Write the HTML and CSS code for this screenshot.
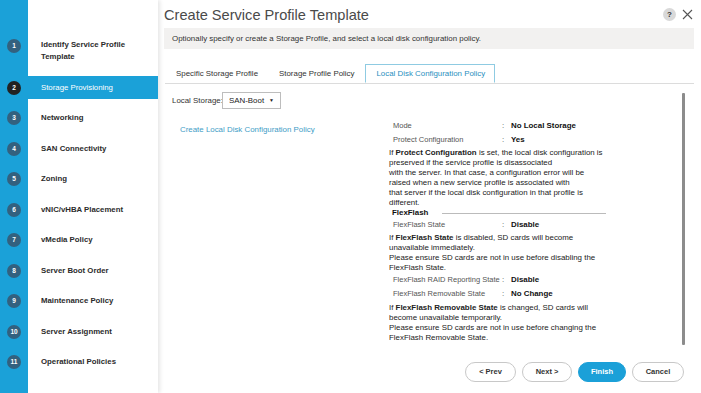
FILE: index.html
```html
<!DOCTYPE html>
<html>
    <head>
        <meta charset="UTF-8">
        <meta name="viewport" content="width=device-width, initial-scale=1.0">
        <link rel="stylesheet" href="styles.css">
    </head>
    <body>
        <div class="sidebar">
            <div class="step first"><span class="num"><span class="dot">1</span></span><span class="label">Identify Service Profile<br>Template</span></div>
            <div class="step active"><span class="num"><span class="dot">2</span></span><span class="label">Storage Provisioning</span></div>
            <div class="step"><span class="num"><span class="dot">3</span></span><span class="label">Networking</span></div>
            <div class="step"><span class="num"><span class="dot">4</span></span><span class="label">SAN Connectivity</span></div>
            <div class="step"><span class="num"><span class="dot">5</span></span><span class="label">Zoning</span></div>
            <div class="step"><span class="num"><span class="dot">6</span></span><span class="label">vNIC/vHBA Placement</span></div>
            <div class="step"><span class="num"><span class="dot">7</span></span><span class="label">vMedia Policy</span></div>
            <div class="step"><span class="num"><span class="dot">8</span></span><span class="label">Server Boot Order</span></div>
            <div class="step"><span class="num"><span class="dot">9</span></span><span class="label">Maintenance Policy</span></div>
            <div class="step"><span class="num"><span class="dot">10</span></span><span class="label">Server Assignment</span></div>
            <div class="step"><span class="num"><span class="dot">11</span></span><span class="label">Operational Policies</span></div>
        </div>

        <div class="main">
            <div class="header">
                <h1 class="title">Create Service Profile Template</h1>
                <div class="tools">
                    <span class="help">?</span>
                    <svg class="close" width="11" height="11" viewBox="0 0 11 11"><path d="M1 1 L10 10 M10 1 L1 10" stroke="#555" stroke-width="1.1" fill="none"/></svg>
                </div>
            </div>
            <div class="desc">Optionally specify or create a Storage Profile, and select a local disk configuration policy.</div>

            <div class="tabs">
                <span class="tab">Specific Storage Profile</span>
                <span class="tab">Storage Profile Policy</span>
                <span class="tab selected">Local Disk Configuration Policy</span>
            </div>

            <div class="content">
                <div class="pane">
                    <div class="storage-row">
                        <span class="field-label">Local Storage:</span>
                        <span class="select">SAN-Boot <span class="caret">&#9660;</span></span>
                    </div>
                    <div class="columns">
                        <div class="left">
                            <a class="link">Create Local Disk Configuration Policy</a>
                        </div>
                        <div class="right">
                            <div class="kv"><span class="key">Mode</span><span class="colon">:</span><span class="val">No Local Storage</span></div>
                            <div class="kv"><span class="key">Protect Configuration</span><span class="colon">:</span><span class="val">Yes</span></div>
                            <p class="note">If <b>Protect Configuration</b> is set, the local disk configuration is<br>preserved if the service profile is disassociated<br>with the server. In that case, a configuration error will be<br>raised when a new service profile is associated with<br>that server if the local disk configuration in that profile is<br>different.</p>
                            <div class="section">FlexFlash</div>
                            <div class="kv"><span class="key">FlexFlash State</span><span class="colon">:</span><span class="val">Disable</span></div>
                            <p class="note">If <b>FlexFlash State</b> is disabled, SD cards will become<br>unavailable immediately.<br>Please ensure SD cards are not in use before disabling the<br>FlexFlash State.</p>
                            <div class="kv"><span class="key">FlexFlash RAID Reporting State</span><span class="colon">:</span><span class="val">Disable</span></div>
                            <div class="kv"><span class="key">FlexFlash Removable State</span><span class="colon">:</span><span class="val">No Change</span></div>
                            <p class="note last">If <b>FlexFlash Removable State</b> is changed, SD cards will<br>become unavailable temporarily.<br>Please ensure SD cards are not in use before changing the<br>FlexFlash Removable State.</p>
                        </div>
                    </div>
                </div>
                <div class="scrollbar"></div>
            </div>

            <div class="footer">
                <span class="btn">&lt; Prev</span>
                <span class="btn">Next &gt;</span>
                <span class="btn primary">Finish</span>
                <span class="btn">Cancel</span>
            </div>
        </div>
    </body>
</html>
```

FILE: styles.css
```css
body{
    margin: 0;
    width: 701px;
    height: 393px;
    overflow: hidden;
    display: flex;
    font-family: "Liberation Sans", Arial, sans-serif;
    color: #222;
    background: #fff;
}

/* wizard steps */
.sidebar{
    width: 158px;
    flex-shrink: 0;
    padding-top: 39px;
    display: flex;
    flex-direction: column;
    gap: 7.5px;
    background: linear-gradient(90deg, #1ba1d8 0, #1ba1d8 28px, #fff 28px);
    box-shadow: 2px 0 4px rgba(0,0,0,0.10);
    position: relative;
    z-index: 1;
}
.step{
    display: flex;
    align-items: center;
    height: 23px;
}
.step.first{
    align-items: flex-start;
    height: 29.5px;
}
.step .num{
    width: 28px;
    display: flex;
    justify-content: center;
}
.step .dot{
    width: 14px;
    height: 14px;
    border-radius: 50%;
    background: #33617f;
    color: #fff;
    font-size: 6.5px;
    font-weight: bold;
    line-height: 14px;
    text-align: center;
}
.step .label{
    margin-left: 13px;
    font-size: 7.8px;
    font-weight: bold;
    color: #2b2b2b;
    line-height: 12px;
}
.step.active{
    background: #1ba1d8;
}
.step.active .dot{
    background: #222;
}
.step.active .label{
    color: #fff;
    font-weight: normal;
}

/* main panel */
.main{
    flex: 1;
    padding: 0 7px 0 6px;
    display: flex;
    flex-direction: column;
}
.header{
    display: flex;
    justify-content: space-between;
    padding-top: 7px;
}
.title{
    margin: 0;
    font-size: 14.6px;
    font-weight: normal;
    line-height: 16px;
    color: #4a4a4a;
}
.tools{
    display: flex;
    align-items: center;
    gap: 6px;
    margin-top: -1px;
    padding-right: 1px;
}
.help{
    width: 13px;
    height: 13px;
    border-radius: 50%;
    background: #d9d9d9;
    color: #333;
    font-size: 8px;
    font-weight: bold;
    line-height: 13px;
    text-align: center;
}
.desc{
    margin-top: 5px;
    height: 21px;
    line-height: 21px;
    padding-left: 8px;
    background: #f2f1f0;
    font-size: 7.9px;
    color: #333;
}

/* tabs */
.tabs{
    margin-top: 15px;
    margin-left: 1px;
    height: 19px;
    display: flex;
    border-bottom: 1px solid #dcdcdc;
}
.tab{
    padding: 0 10px 0 11px;
    font-size: 7.9px;
    line-height: 19px;
    color: #333;
}
.tab.selected{
    padding: 0 9px 0 10px;
    margin-left: 1px;
    border: 1px solid #8fcbe2;
    border-bottom: 1px solid #fff;
    line-height: 18px;
    color: #2a8fc0;
    background: #fff;
}

/* content */
.content{
    height: 266px;
    display: flex;
}
.pane{
    flex: 1;
    padding: 8px 0 0 8px;
}
.storage-row{
    display: flex;
    align-items: center;
    height: 17px;
}
.field-label{
    font-size: 7.9px;
    color: #333;
    width: 50px;
    flex-shrink: 0;
    white-space: nowrap;
}
.select{
    height: 15px;
    padding: 0 6px 0 6px;
    width: 45px;
    border: 1px solid #bdbdbd;
    font-size: 7.9px;
    line-height: 15px;
    color: #222;
    display: flex;
    justify-content: space-between;
}
.caret{
    font-size: 5px;
}
.columns{
    display: flex;
    margin-top: 10px;
}
.left{
    width: 217px;
}
.link{
    display: block;
    margin: 6px 0 0 8px;
    font-size: 7.9px;
    line-height: 10px;
    color: #3e9cc6;
}
.right{
    width: 217px;
}
.kv{
    display: flex;
    height: 14px;
    line-height: 14px;
    font-size: 7.9px;
    padding-left: 4px;
    white-space: nowrap;
}
.key{
    width: 109px;
    flex-shrink: 0;
    font-size: 7.5px;
    color: #555;
}
.colon{
    width: 9px;
    color: #555;
}
.val{
    font-weight: bold;
    color: #111;
}
.note{
    margin: 1px 0 0 0;
    font-size: 7.9px;
    line-height: 10px;
    color: #222;
}
.note.last{
    margin-top: 2px;
}
.section{
    display: flex;
    align-items: center;
    padding-left: 3px;
    font-size: 7.9px;
    font-weight: bold;
    line-height: 10px;
    color: #111;
}
.section::after{
    content: "";
    flex: 1;
    margin-left: 14px;
    border-top: 1px solid #bbb;
}
.scrollbar{
    width: 3px;
    height: 252px;
    margin: 9px 9px 0 0;
    background: #8c8c8c;
    border-radius: 1px;
}

/* buttons */
.footer{
    margin-top: 12px;
    display: flex;
    justify-content: flex-end;
    gap: 6px;
    padding-right: 10px;
}
.btn{
    height: 18px;
    line-height: 18px;
    border: 1px solid #c8c8c8;
    border-radius: 10px;
    text-align: center;
    font-size: 7.5px;
    font-weight: bold;
    color: #333;
    background: #fff;
    width: 49px;
}
.btn:nth-child(2){
    width: 48px;
}
.btn.primary{
    width: 46px;
    background: #1ba0d8;
    border-color: #1ba0d8;
    color: #fff;
}
.btn:last-child{
    width: 50px;
}
```
